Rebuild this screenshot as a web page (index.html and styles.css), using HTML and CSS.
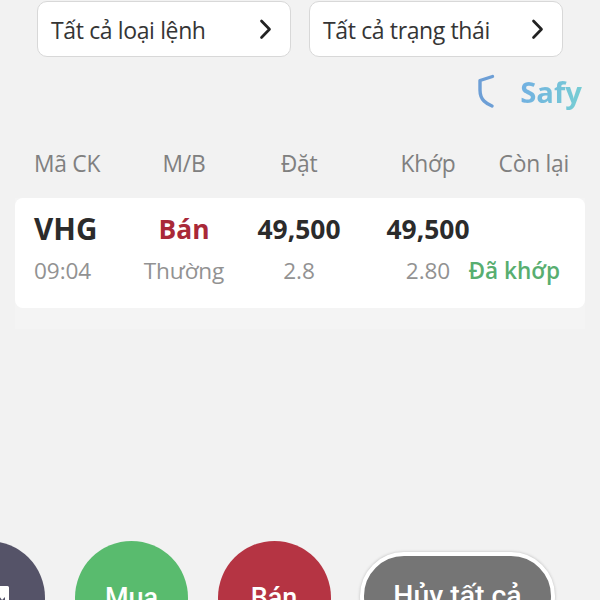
FILE: index.html
```html
<!DOCTYPE html>
<html lang="vi">
<head>
<meta charset="utf-8">
<title>Sổ lệnh</title>
<link rel="stylesheet" href="styles.css">
</head>
<body>
<main class="screen">
  <div class="filters">
    <div class="filter"><span>Tất cả loại lệnh</span><svg class="chevron" width="14" height="22" viewBox="0 0 14 22"><path d="M2.500 2 L10.500 10.300 L2.500 18.500"/></svg></div>
    <div class="filter"><span>Tất cả trạng thái</span><svg class="chevron" width="14" height="22" viewBox="0 0 14 22"><path d="M2.500 2 L10.500 10.300 L2.500 18.500"/></svg></div>
  </div>
  <div class="brand">
    <svg class="shield" width="22" height="36" viewBox="0 0 22 36"><path d="M16.500 2.500 L4 6.500 V16 Q4 23 8 27 Q11 30 16 32"/></svg>
    <span class="safy">Safy</span>
  </div>
  <div class="grid head">
    <span>Mã CK</span><span>M/B</span><span>Đặt</span><span>Khớp</span><span class="last">Còn lại</span>
  </div>
  <section class="order">
    <div class="card">
      <div class="grid main"><span class="code">VHG</span><span class="sell">Bán</span><span>49,500</span><span>49,500</span></div>
      <div class="grid sub"><span>09:04</span><span>Thường</span><span>2.8</span><span>2.80</span><span class="last status">Đã khớp</span></div>
    </div>
  </section>
  <footer class="actions">
    <div class="round menu"><svg width="40" height="26" viewBox="0 0 40 26"><path fill="#fff" d="M18 1H38.500Q40 1 40 2.500V26H36V12L33 15L30 11H18Z"/></svg></div>
    <div class="round buy">Mua</div>
    <div class="round short">Bán</div>
    <div class="cancel">Hủy tất cả</div>
  </footer>
</main>
</body>
</html>
```
FILE: styles.css
```css
* { box-sizing: border-box; }
body { margin: 0; background: #f2f2f2; font-family: "Open Sans", "Noto Sans", sans-serif; }
.screen { width: 600px; height: 600px; overflow: hidden; display: flex; flex-direction: column; }
.screen > * { flex-shrink: 0; }
.filters { display: flex; gap: 18px; padding: 1px 0 0 37px; }
.filter { width: 254px; height: 56px; border: 1px solid #d8d8d8; border-radius: 10px; background: #fff; padding: 1px 17px 0 13px; display: flex; align-items: center; justify-content: space-between; font-size: 23px; letter-spacing: -0.37px; color: #353535; white-space: nowrap; }
.chevron path { fill: none; stroke: #222; stroke-width: 2.7; stroke-linecap: round; stroke-linejoin: round; }
.brand { height: 70px; display: flex; justify-content: flex-end; align-items: center; gap: 22px; padding-right: 18px; }
.shield path { fill: none; stroke: #6d9fd6; stroke-width: 3.4; stroke-linecap: round; stroke-linejoin: round; }
.safy { font-size: 29.3px; font-weight: 700; line-height: 42px; color: transparent; background: linear-gradient(100deg, #72aee2, #76cfd3); background-clip: text; -webkit-background-clip: text; }
.grid { display: grid; grid-template-columns: 92px 116px 114px 144px 69px; padding-left: 34px; text-align: center; white-space: nowrap; align-items: center; }
.grid > :first-child { text-align: left; }
.last { justify-self: end; }
.head { height: 71px; padding-top: 2px; font-size: 22.8px; letter-spacing: -0.25px; line-height: 34px; color: #808080; }
.order { margin: 0 15px; height: 131px; background: #f4f4f4; }
.card { height: 110px; border-radius: 8px; background: #fff; padding-top: 10px; }
.card .grid { padding-left: 19px; }
.main { height: 41px; font-size: 26.4px; font-weight: 700; color: #2b2b2b; }
.main .code { font-size: 29.6px; }
.main .sell { color: #a92838; }
.sub { height: 43px; font-size: 22.6px; letter-spacing: -0.1px; color: #929292; }
.sub .status { padding-right: 9px; color: #58ae70; font-weight: 600; letter-spacing: 0; }
.actions { margin-top: 212px; display: flex; align-items: flex-start; color: #fff; font: 500 27px/32px Roboto, sans-serif; white-space: nowrap; }
.round { width: 113px; height: 113px; border-radius: 50%; display: flex; align-items: center; justify-content: center; flex-shrink: 0; }
.menu { margin-left: -68px; background: #555368; }
.menu svg { margin-right: -1px; }
.buy { margin-left: 30px; background: #59bb6e; }
.short { margin-left: 29.5px; background: #b53443; }
.cancel { width: 195px; height: 88px; margin: 11px 0 0 29.5px; border: 4px solid #fff; border-radius: 44px; background: #757575; box-shadow: 0 0 3px #bbb; display: flex; align-items: center; justify-content: center; font-size: 28.4px; }
```
